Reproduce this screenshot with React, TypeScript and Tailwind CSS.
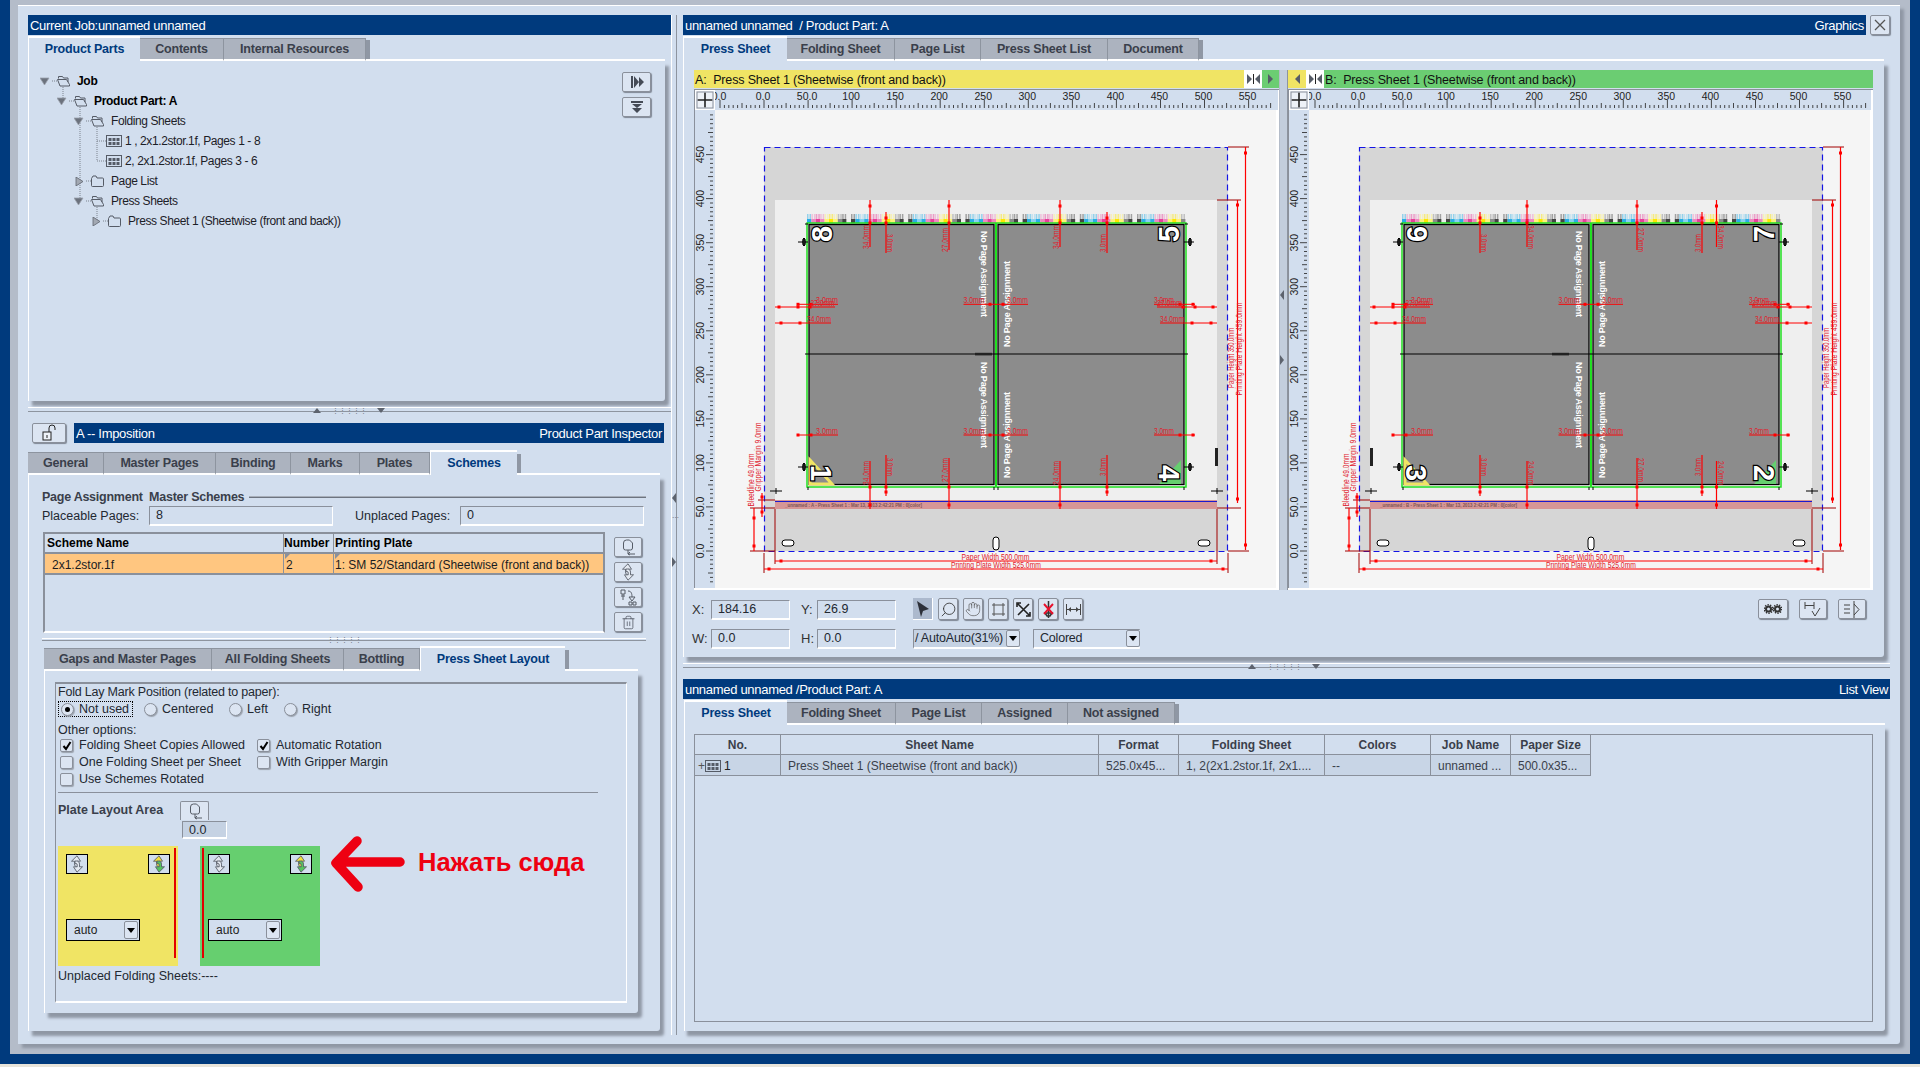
import { Hand, Search, Trash2 } from 'lucide-react';
import type { ReactNode } from 'react';

type Tab = { label: string; w: string };

const LEFT_TOP_TABS: Tab[] = [
  { label: 'Product Parts', w: 'w-[112px]' },
  { label: 'Contents', w: 'w-[84px]' },
  { label: 'Internal Resources', w: 'w-[142px]' },
];
const INSPECTOR_TABS: Tab[] = [
  { label: 'General', w: 'w-[76px]' },
  { label: 'Master Pages', w: 'w-[112px]' },
  { label: 'Binding', w: 'w-[75px]' },
  { label: 'Marks', w: 'w-[69px]' },
  { label: 'Plates', w: 'w-[70px]' },
  { label: 'Schemes', w: 'w-[87px]' },
];
const SCHEME_TABS: Tab[] = [
  { label: 'Gaps and Master Pages', w: 'w-[168px]' },
  { label: 'All Folding Sheets', w: 'w-[132px]' },
  { label: 'Bottling', w: 'w-[76px]' },
  { label: 'Press Sheet Layout', w: 'w-[145px]' },
];
const GRAPHICS_TABS: Tab[] = [
  { label: 'Press Sheet', w: 'w-[104px]' },
  { label: 'Folding Sheet', w: 'w-[108px]' },
  { label: 'Page List', w: 'w-[86px]' },
  { label: 'Press Sheet List', w: 'w-[127px]' },
  { label: 'Document', w: 'w-[91px]' },
];
const LIST_TABS: Tab[] = [
  { label: 'Press Sheet', w: 'w-[103px]' },
  { label: 'Folding Sheet', w: 'w-[109px]' },
  { label: 'Page List', w: 'w-[86px]' },
  { label: 'Assigned', w: 'w-[86px]' },
  { label: 'Not assigned', w: 'w-[107px]' },
];

function TitleBar({ left, right, className = '' }: { left: string; right?: string; className?: string }) {
  return (
    <div className={`flex h-[20px] items-center justify-between bg-[#003a7d] px-[2px] pt-[1px] text-[13px] tracking-[-0.3px] text-white whitespace-pre ${className}`}>
      <span>{left}</span>
      {right && <span>{right}</span>}
    </div>
  );
}

function TabBar({ tabs, active }: { tabs: Tab[]; active: number }) {
  return (
    <div className="flex h-[26px] items-end">
      {tabs.map((t, i) =>
        i === active ? (
          <div key={t.label} className={`${t.w} flex h-[25px] items-center justify-center border-l border-t-2 border-white text-[12.5px] font-bold tracking-[-0.2px] text-[#003a7d]`}>
            {t.label}
          </div>
        ) : (
          <div key={t.label} className={`${t.w} flex h-[23px] items-center justify-center border-r border-t border-b-2 border-r-[#8d949f] border-t-[#8d949f] border-b-white bg-[#acb3bf] text-[12.5px] font-bold tracking-[-0.2px] text-[#3a3f4b]`}>
            {t.label}
          </div>
        ),
      )}
      <div className="h-[21px] w-[4px] border-b-2 border-b-white bg-[#8f97a4]" />
      <div className="flex-1 border-b-2 border-white" />
    </div>
  );
}

function Divider({ dotsClass }: { dotsClass: string }) {
  return (
    <div className="flex h-[22px] flex-col">
      <div className="mt-[6px] flex h-[5px] items-start border-t border-white border-b border-b-[#8d949f]">
        <div className={`${dotsClass} flex h-[5px] items-center`}>
          <span className="h-0 w-0 border-x-[4px] border-b-[5px] border-x-transparent border-b-[#5d636e]" />
          <span className="flex w-[56px] justify-center text-[7px] leading-[5px] tracking-[0px] text-[#6d7480]">{'⋮⋮⋮⋮⋮'}</span>
          <span className="h-0 w-0 border-x-[4px] border-t-[5px] border-x-transparent border-t-[#5d636e]" />
        </div>
      </div>
    </div>
  );
}

function IconBtn({ className = '', children }: { className?: string; children?: ReactNode }) {
  return (
    <div className={`flex items-center justify-center rounded-[2px] border border-[#8a909b] bg-[#dce5f2] shadow-[1px_1px_1px_#7f8794] ${className}`}>
      {children}
    </div>
  );
}

function Field({ value, className = '' }: { value: string; className?: string }) {
  return (
    <div className={`flex h-[20px] items-center rounded-[1px] border-l border-t border-b-2 border-r border-l-[#8a909b] border-t-[#8a909b] border-r-white border-b-white pl-[6px] text-[12.5px] text-[#222831] ${className}`}>
      {value}
    </div>
  );
}

function ArrowBtn() {
  return (
    <span className="flex h-full w-[14px] shrink-0 items-center justify-center rounded-[2px] border border-[#8a909b] bg-[#dce5f2]">
      <span className="h-0 w-0 border-x-[4px] border-t-[5px] border-x-transparent border-t-black" />
    </span>
  );
}

function TreeTriangle({ open }: { open: boolean }) {
  return (
    <svg width="10" height="9" viewBox="0 0 10 9" className="shrink-0">
      {open ? <polygon points="0,1 9,1 4.5,8" fill="#6c727d" stroke="#9aa1ac" strokeWidth="0.8" /> : <polygon points="2,0 9,4.5 2,9" fill="#a2a8b2" stroke="#5f6570" strokeWidth="0.8" />}
    </svg>
  );
}

function FolderIcon({ open }: { open: boolean }) {
  return (
    <svg width="15" height="12" viewBox="0 0 15 12" className="block shrink-0" fill="none" stroke="#555b66" strokeWidth="1">
      {open ? (
        <path d="M2.5 3.5V1.5h4l1 1.5h4.5v4M1.5 4.5h9l3 5v1.5h-9.5z" />
      ) : (
        <path d="M1.5 3.5v7a1 1 0 0 0 1 1h10a1 1 0 0 0 1-1v-6.5a1 1 0 0 0-1-1H7l-1-2H3z" />
      )}
    </svg>
  );
}

function GridIcon({ className = '' }: { className?: string }) {
  return (
    <svg width="16" height="12" viewBox="0 0 16 12" className={`block shrink-0 ${className}`} fill="#555b66">
      <rect x="0.5" y="0.5" width="15" height="11" fill="none" stroke="#555b66" />
      {[2.5, 6.5, 10.5].map(x => [3, 7].map(y => <rect key={`${x}-${y}`} x={x} y={y} width="3" height="3" />))}
    </svg>
  );
}

const TREE = [
  { pl: 'pl-[11px]', label: 'Job', tri: true, open: true, kind: 'folder', bold: true },
  { pl: 'pl-[28px]', label: 'Product Part: A', tri: true, open: true, kind: 'folder', bold: true },
  { pl: 'pl-[45px]', label: 'Folding Sheets', tri: true, open: true, kind: 'folder' },
  { pl: 'pl-[77px]', label: '1 , 2x1.2stor.1f, Pages 1 - 8', tri: false, open: false, kind: 'grid' },
  { pl: 'pl-[77px]', label: '2, 2x1.2stor.1f, Pages 3 - 6', tri: false, open: false, kind: 'grid' },
  { pl: 'pl-[45px]', label: 'Page List', tri: true, open: false, kind: 'folder' },
  { pl: 'pl-[45px]', label: 'Press Sheets', tri: true, open: true, kind: 'folder' },
  { pl: 'pl-[62px]', label: 'Press Sheet 1 (Sheetwise (front and back))', tri: true, open: false, kind: 'folder' },
];

function Tree() {
  return (
    <div className="relative flex flex-col pt-[10px]">
      <svg width="120" height="170" className="absolute left-0 top-[10px]" fill="none" stroke="#7d838e" strokeWidth="1" strokeDasharray="1 1">
        <path d="M34 16V28M23 10h5M40 30h5M51 36V130M57 50h5M68 56V90M68 70h9M68 90h9M57 110h5M57 130h5M68 136V150M74 150h5" />
      </svg>
      {TREE.map(r => (
        <div key={r.label} className={`relative flex h-[20px] items-center ${r.pl} text-[12px] ${r.bold ? 'font-bold tracking-[-0.3px] text-black' : 'tracking-[-0.4px] text-[#1c2027]'}`}>
          {r.tri && <TreeTriangle open={r.open} />}
          {r.kind === 'folder' ? (
            <span className="ml-[6px] mr-[6px]">
              <FolderIcon open={r.open} />
            </span>
          ) : (
            <span className="mr-[3px]">
              <GridIcon />
            </span>
          )}
          <span>{r.label}</span>
        </div>
      ))}
    </div>
  );
}

function PartsPanel() {
  return (
    <div className="flex h-[340px] justify-between rounded-br-[3px] border-l border-white shadow-[4px_5px_3px_#8f97a4]">
      <div>
        <Tree />
      </div>
      <div className="flex flex-col gap-[5px] pr-[14px] pt-[11px]">
        <IconBtn className="h-[20px] w-[29px]">
          <svg width="14" height="12" viewBox="0 0 14 12">
            <path d="M1 0h2v12H1zM4 0l5 6-5 6zM9 1l5 5-5 5z" fill="#454b56" />
          </svg>
        </IconBtn>
        <IconBtn className="h-[20px] w-[29px]">
          <svg width="14" height="12" viewBox="0 0 14 12">
            <path d="M1 0h12v2H1zM2 3h10l-5 4zM2 7h10l-5 5z" fill="#454b56" />
          </svg>
        </IconBtn>
      </div>
    </div>
  );
}

function SyncIcon({ fill1 = '#e4e9f1', fill2 = '#e4e9f1' }: { fill1?: string; fill2?: string }) {
  const half = 'M9 .8 3.5 6.2h3v2.6c0 2 1.2 3.2 3 3.2h1.5V9.4H10c-.8 0-1.2-.4-1.2-1.2V6.2h3.7z';
  return (
    <svg width="18" height="18" viewBox="0 0 18 18" stroke="#5a606b" strokeWidth="0.9">
      <path d={half} fill={fill1} />
      <path d={half} fill={fill2} transform="rotate(180 9 9)" />
    </svg>
  );
}

function PasteIcon() {
  return (
    <svg width="18" height="18" viewBox="0 0 18 18" fill="none" stroke="#565c67">
      <path d="M4.5 5a3 3 0 0 1 3-3h3l3 3v5a2 2 0 0 1-2 2h-5a2 2 0 0 1-2-2zM9 12v4h7M9 16l2-2M9 16l2 1" />
    </svg>
  );
}

function SchemeTable() {
  return (
    <div className="h-[101px] w-[562px] border-x-2 border-t-2 border-b-2 border-x-[#8a909b] border-t-[#8a909b] border-b-white text-[12px]">
      <div className="grid h-[20px] grid-cols-[239px_50px_1fr] border-b-2 border-[#8a909b] font-bold text-black">
        <div className="flex items-center border-r border-[#8a909b] pl-[2px]">Scheme Name</div>
        <div className="flex items-center border-r border-[#8a909b]">Number</div>
        <div className="flex items-center pl-[1px]">Printing Plate</div>
      </div>
      <div className="grid h-[21px] grid-cols-[239px_50px_1fr] border-b-2 border-[#8a909b] bg-[#ffc680] text-[#191c22]">
        <div className="flex items-center border-r border-[#8a909b] pl-[7px] pt-[1px]">2x1.2stor.1f</div>
        <div className="relative flex items-center border-r border-[#8a909b] pl-[2px] pt-[2px]">
          <span className="absolute left-[1px] top-0 h-0 w-0 border-r-[5px] border-t-[5px] border-r-transparent border-t-[#8a909b]" />
          2
        </div>
        <div className="relative flex items-center pl-[1px] pt-[2px] whitespace-nowrap">
          <span className="absolute left-[1px] top-0 h-0 w-0 border-r-[5px] border-t-[5px] border-r-transparent border-t-[#8a909b]" />
          1: SM 52/Standard (Sheetwise (front and back))
        </div>
      </div>
    </div>
  );
}

function SmallSync({ colored }: { colored?: boolean }) {
  return (
    <div className="flex h-[20px] w-[22px] items-center justify-center border border-black bg-[#d2deee]">
      {colored ? <SyncIcon fill1="#f3df3c" fill2="#56c45f" /> : <SyncIcon />}
    </div>
  );
}

function AutoSelect() {
  return (
    <div className="mt-[45px] flex h-[22px] w-[74px] items-center justify-between border border-black bg-[#d2deee] pl-[7px] pr-[1px] py-[1px] text-[12px] text-[#222]">
      auto
      <ArrowBtn />
    </div>
  );
}

function Radio({ on, label, className = '' }: { on?: boolean; label: string; className?: string }) {
  return (
    <div className={`flex items-center ${className}`}>
      <span className="flex h-[13px] w-[13px] shrink-0 items-center justify-center rounded-full border border-[#8a909b] bg-[#dce5f2] shadow-[1px_1px_1px_#9aa1ac]">
        {on && <span className="h-[5px] w-[5px] rounded-full bg-black" />}
      </span>
      <span className="ml-[5px] text-[12.5px] text-[#222831] whitespace-nowrap">{label}</span>
    </div>
  );
}

function Check({ on, label, className = '' }: { on?: boolean; label: string; className?: string }) {
  return (
    <div className={`flex h-[17px] items-center ${className}`}>
      <span className="flex h-[13px] w-[13px] shrink-0 items-center justify-center rounded-[2px] border border-[#8a909b] bg-[#dce5f2] shadow-[1px_1px_1px_#9aa1ac]">
        {on && (
          <svg width="10" height="10" viewBox="0 0 10 10" fill="none" stroke="#000" strokeWidth="2">
            <path d="M1.5 5 4 8 8.5 1" />
          </svg>
        )}
      </span>
      <span className="ml-[6px] text-[12.5px] text-[#222831] whitespace-nowrap">{label}</span>
    </div>
  );
}

function PressSheetLayout() {
  return (
    <div className="ml-[2px] h-[342px] w-[594px] rounded-br-[3px] border-l border-white pl-[10px] pt-[11px] shadow-[4px_5px_3px_#8f97a4]">
      <div className="h-[321px] w-[572px] border-x border-y-2 border-l-[#8a909b] border-t-[#8a909b] border-r-white border-b-white pl-[2px] text-[12.5px] text-[#222831]">
        <div className="flex h-[17px] items-center tracking-[-0.2px]">Fold Lay Mark Position (related to paper):</div>
        <div className="flex h-[16px] items-center">
          <div className="flex h-[16px] w-[75px] shrink-0 items-center border border-dotted border-black pl-[2px]">
            <Radio on label="Not used" />
          </div>
          <Radio label="Centered" className="ml-[11px] w-[85px]" />
          <Radio label="Left" className="w-[55px]" />
          <Radio label="Right" />
        </div>
        <div className="mt-[6px] flex h-[14px] items-center">Other options:</div>
        <div className="grid w-[400px] grid-cols-[197px_1fr] pl-[2px]">
          <Check on label="Folding Sheet Copies Allowed" />
          <Check on label="Automatic Rotation" />
          <Check label="One Folding Sheet per Sheet" />
          <Check label="With Gripper Margin" />
          <Check label="Use Schemes Rotated" />
        </div>
        <div className="mt-[3px] h-[2px] w-[540px] border-b border-[#8a909b]" />
        <div className="mt-[7px] flex h-[19px] items-center pt-[1px]">
          <span className="w-[122px] font-bold text-[#3a3f4b]">Plate Layout Area</span>
          <div className="flex h-[19px] w-[29px] items-center justify-center rounded-t-[2px] border-x border-t border-[#8a909b] bg-[#dce5f2]">
            <PasteIcon />
          </div>
        </div>
        <div className="ml-[124px] mt-[2px] flex h-[18px] w-[45px] items-center rounded-[1px] border border-b-2 border-[#8a909b] border-b-white border-r-white bg-[#c5d2e3] pl-[6px] pt-[1px]">0.0</div>
        <div className="mt-[7px] flex items-start">
          <div className="relative h-[120px] w-[120px] bg-[#f0e464] pl-[8px] pt-[8px]">
            <div className="flex w-[104px] justify-between">
              <SmallSync />
              <SmallSync colored />
            </div>
            <AutoSelect />
            <span className="absolute bottom-[8px] right-[2px] top-[2px] w-[2px] bg-[#e30000]" />
          </div>
          <div className="relative ml-[22px] h-[120px] w-[120px] bg-[#66cf6f] pl-[8px] pt-[8px]">
            <div className="flex w-[104px] justify-between">
              <SmallSync />
              <SmallSync colored />
            </div>
            <AutoSelect />
            <span className="absolute bottom-[8px] left-[2px] top-[2px] w-[2px] bg-[#e30000]" />
          </div>
          <svg width="78" height="60" viewBox="0 0 78 60" className="ml-[10px] mt-[-12px]" fill="none" stroke="#ee0012" strokeWidth="9.5" strokeLinecap="round" strokeLinejoin="round">
            <path d="M27 7 6 29l22 24M8 28h62" />
          </svg>
          <span className="ml-[10px] text-[25.5px] font-bold leading-[32px] text-[#ee0012] whitespace-nowrap">Нажать сюда</span>
        </div>
        <div className="mt-[3px] flex h-[14px] items-center">Unplaced Folding Sheets:----</div>
      </div>
    </div>
  );
}

function InspectorPanel() {
  return (
    <div className="h-[556px] w-[632px] rounded-br-[3px] border-l border-white pl-[13px] pt-[14px] shadow-[4px_5px_3px_#8f97a4]">
      <div className="flex h-[16px] w-[604px] items-center text-[12.5px] font-bold tracking-[-0.25px] text-[#3a3f4b]">
        <span className="whitespace-pre">Page Assignment  Master Schemes</span>
        <span className="ml-[5px] h-[2px] flex-1 border-b border-[#6d7480] bg-[#a8afba]" />
      </div>
      <div className="mt-[1px] flex items-center text-[12.5px] text-[#222831]">
        <span className="w-[107px]">Placeable Pages:</span>
        <Field value="8" className="w-[184px]" />
        <span className="ml-[22px] w-[105px]">Unplaced Pages:</span>
        <Field value="0" className="w-[184px]" />
      </div>
      <div className="ml-[1px] mt-[6px] flex items-start">
        <SchemeTable />
        <div className="ml-[9px] flex flex-col gap-[5px] pt-[5px]">
          <IconBtn className="h-[20px] w-[28px]"><PasteIcon /></IconBtn>
          <IconBtn className="h-[20px] w-[28px]"><SyncIcon /></IconBtn>
          <IconBtn className="h-[20px] w-[28px]">
            <svg width="18" height="18" viewBox="0 0 18 18" fill="none" stroke="#565c67">
              <path d="M2 2h4v4H2zM2 8h4M4 6v6M9 3c3 0 4 2 4 6M10 9h6l-3 4zM10 14h3v3h-3zM14 14h3v3h-3z" />
            </svg>
          </IconBtn>
          <IconBtn className="h-[20px] w-[28px]">
            <Trash2 size={15} strokeWidth={1.1} color="#3f4550" />
          </IconBtn>
        </div>
      </div>
      <div className="mt-[5px] flex h-[3px] w-[604px] items-center justify-center border-t border-white border-b border-b-[#8d949f]">
        <span className="text-[7px] leading-[3px] text-[#6d7480]">{'⋮⋮⋮⋮⋮'}</span>
      </div>
      <div className="ml-[2px] mt-[4px] w-[594px]">
        <TabBar tabs={SCHEME_TABS} active={3} />
      </div>
      <PressSheetLayout />
    </div>
  );
}

function LeftColumn() {
  return (
    <div className="w-[643px] shrink-0">
      <TitleBar left="Current Job:unnamed unnamed" />
      <div className="w-[637px]">
        <TabBar tabs={LEFT_TOP_TABS} active={0} />
        <PartsPanel />
      </div>
      <Divider dotsClass="ml-[285px]" />
      <div className="flex h-[20px] items-center pl-[4px] pr-[7px]">
        <IconBtn className="h-[20px] w-[34px]">
          <svg width="16" height="18" viewBox="0 0 16 18" fill="none" stroke="#222">
            <rect x="2" y="8" width="8" height="8" fill="#eef2f8" />
            <path d="M8 8V4a3 3 0 0 1 6 0v2M6 11v3" />
          </svg>
        </IconBtn>
        <TitleBar left="A -- Imposition" right="Product Part Inspector" className="ml-[8px] flex-1" />
      </div>
      <div className="mt-[6px] w-[632px]">
        <TabBar tabs={INSPECTOR_TABS} active={5} />
        <InspectorPanel />
      </div>
    </div>
  );
}

function ColumnSplitter() {
  return (
    <div className="flex w-[12px] shrink-0 flex-col items-start">
      <div className="relative h-[1020px] w-[6px] border-x border-l-white border-r-[#8d949f]">
        <span className="absolute left-0 top-[478px] h-0 w-0 border-y-[5px] border-r-[4px] border-y-transparent border-r-[#5d636e]" />
        <span className="absolute left-0 top-[542px] h-0 w-0 border-y-[5px] border-l-[4px] border-y-transparent border-l-[#5d636e]" />
        <span className="absolute left-0 top-[500px] text-[7px] leading-[5px] text-[#6d7480]">{'⋯'}</span>
      </div>
    </div>
  );
}

const BAR_COLORS = ['#2aaee6', '#ee88c0', '#e83e9a', '#ee88c0', '#fff27a', '#ffe600', '#fff27a', '#8a8a8a', '#444444', '#eeeeee', '#444444', '#2aaee6', '#88d0f0'];

type VDim = { x: number; top: string; bottom: string; side: 1 | -1 };

const DIMS_A: VDim[] = [
  { x: 106, top: '34.0mm', bottom: '34.0mm', side: -1 },
  { x: 122, top: '3.0mm', bottom: '3.0mm', side: 1 },
  { x: 185, top: '27.0mm', bottom: '27.0mm', side: -1 },
  { x: 296, top: '34.0mm', bottom: '24.0mm', side: -1 },
  { x: 343, top: '3.0mm', bottom: '3.0mm', side: -1 },
];
const DIMS_B: VDim[] = [
  { x: 121, top: '3.0mm', bottom: '3.0mm', side: 1 },
  { x: 168, top: '34.0mm', bottom: '24.0mm', side: 1 },
  { x: 278, top: '27.0mm', bottom: '27.0mm', side: 1 },
  { x: 343, top: '3.0mm', bottom: '3.0mm', side: -1 },
  { x: 357.5, top: '34.0mm', bottom: '24.0mm', side: 1 },
];

const RED = '#ff0000';
const DARK_RED = '#a00000';
const LABEL = '#e0202c';

function RedText({ x, y, w, rot, children }: { x: number; y: number; w: number; rot?: number; children: string }) {
  return (
    <text
      x={x}
      y={y}
      fontSize="8.5"
      fill={LABEL}
      textLength={w}
      lengthAdjust="spacingAndGlyphs"
      textAnchor={rot ? 'middle' : undefined}
      transform={rot ? `rotate(${rot} ${x} ${y})` : undefined}
    >
      {children}
    </text>
  );
}

function HDim({ x1, x2, y, ticks }: { x1: number; x2: number; y: number; ticks: number[] }) {
  return (
    <g>
      <line x1={x1} x2={x2} y1={y} y2={y} stroke={RED} strokeWidth="1" />
      {ticks.map(t => (
        <rect key={t} x={t - 1.5} y={y - 1.5} width="3" height="3" fill={RED} />
      ))}
    </g>
  );
}

function VLine({ x, y1, y2, ticks }: { x: number; y1: number; y2: number; ticks: number[] }) {
  return (
    <g>
      <line x1={x} x2={x} y1={y1} y2={y2} stroke={RED} strokeWidth="1.2" />
      {ticks.map(t => (
        <rect key={t} x={x - 1.5} y={t - 1.5} width="3" height="3" fill={RED} />
      ))}
    </g>
  );
}

function PageNumber({ n, x, y, rot }: { n: string; x: number; y: number; rot: number }) {
  return (
    <text
      x={x}
      y={y}
      fontSize="29"
      fontWeight="700"
      fontFamily="'Liberation Sans', sans-serif"
      fill="#fff"
      stroke="#000"
      strokeWidth="2.5"
      paintOrder="stroke"
      textAnchor="middle"
      dominantBaseline="central"
      transform={`rotate(${rot} ${x} ${y})`}
    >
      {n}
    </text>
  );
}

function RegMark({ x, y }: { x: number; y: number }) {
  return (
    <g stroke="#000" strokeWidth="1" fill="none">
      <line x1={x - 5} x2={x + 5} y1={y} y2={y} />
      <ellipse cx={x + 1} cy={y} rx="1.3" ry="4" fill="#222" />
    </g>
  );
}

function RotLabel({ x, y, rot }: { x: number; y: number; rot: number }) {
  return (
    <text x={x} y={y} fontSize="9" fontWeight="700" fill="#fff" textLength="86" lengthAdjust="spacing" textAnchor="middle" dominantBaseline="central" transform={`rotate(${rot} ${x} ${y})`}>
      No Page Assignment
    </text>
  );
}

function PressSheet({ side }: { side: 'A' | 'B' }) {
  const isA = side === 'A';
  const dims = isA ? DIMS_A : DIMS_B;
  const nums = isA ? ['8', '5', '1', '4'] : ['6', '7', '3', '2'];
  const cellW = 4.4;
  const cells = Array.from({ length: 86 }, (_, i) => i);
  return (
    <g>
      <rect x="0" y="0" width="464" height="404" fill="#d6d6d6" />
      <rect x="11" y="53" width="442" height="300" fill="#efefef" />
      <rect x="11" y="353" width="442" height="9" fill="#d69696" />
      <line x1="11" x2="453" y1="354.5" y2="354.5" stroke="#1a1ad0" strokeWidth="1" />
      <text x="21" y="360" fontSize="4.5" fontWeight="700" fill="#7d5555" textLength="137" lengthAdjust="spacingAndGlyphs">
        {`_unnamed : ${side}   - Press Sheet 1 : Mar 13, 2013 2:42:21 PM : 0[color]`}
      </text>
      <rect x="0.5" y="0.5" width="463" height="404" fill="none" stroke="#1414e6" strokeWidth="1.2" strokeDasharray="6 4" />

      {cells.map(i => {
        const c = BAR_COLORS[i % BAR_COLORS.length];
        return (
          <g key={i}>
            <rect x={43 + i * cellW} y={72} width={cellW} height={4} fill={c} />
            <line x1={43 + i * cellW} x2={43 + (i + 1) * cellW} y1={69.5} y2={69.5} stroke={c} strokeWidth="5" strokeDasharray="1.5 1" opacity="0.45" />
          </g>
        );
      })}

      <rect x="43" y="76" width="379" height="264" fill="none" stroke="#22e022" strokeWidth="1.5" />
      <line x1="232" x2="232" y1="76" y2="340" stroke="#22e022" strokeWidth="2" />
      <rect x="45" y="77.5" width="185" height="260" fill="#8c8c8c" stroke="#000" strokeWidth="1.3" />
      <rect x="234" y="77.5" width="186" height="260" fill="#8c8c8c" stroke="#000" strokeWidth="1.3" />
      <line x1="41" x2="424" y1="207" y2="207" stroke="#000" strokeWidth="1" />
      <rect x={isA ? 211 : 193} y="205.8" width="17" height="2.6" fill="#222" />

      <path d="M44 340v3M230 340v3M234 340v3M420 340v3M41 77h3M421 77h3" stroke="#000" fill="none" />

      <RegMark x={39} y={95} />
      <RegMark x={425} y={95} />
      <RegMark x={39} y={320} />
      <RegMark x={425} y={320} />

      <polygon points="46,313 68,337 46,337" fill="none" stroke="#f0e464" strokeWidth="3" />
      <polygon points="417,313 395,337 417,337" fill="#66cf6f" />

      <RotLabel x={220} y={127} rot={90} />
      <RotLabel x={220} y={258} rot={90} />
      <RotLabel x={243} y={157} rot={-90} />
      <RotLabel x={243} y={288} rot={-90} />

      <PageNumber n={nums[0]} x={58} y={87} rot={-90} />
      <PageNumber n={nums[1]} x={405} y={87} rot={-90} />
      <PageNumber n={nums[2]} x={57} y={326} rot={90} />
      <PageNumber n={nums[3]} x={405} y={326} rot={90} />

      {dims.map(d => {
        const long = d.top !== '3.0mm';
        const y1 = long ? 53 : 65;
        const y2 = d.top === '27.0mm' ? 103 : long ? 100 : 106;
        const by1 = d.bottom === '27.0mm' ? 311 : d.bottom === '3.0mm' ? 308 : 314;
        const by2 = d.bottom === '3.0mm' ? 349 : 362;
        const tx = d.x + d.side;
        const rot = d.side === 1 ? 90 : -90;
        return (
          <g key={d.x}>
            <VLine x={d.x} y1={y1} y2={y2} ticks={[y1 + 6, 76]} />
            <VLine x={d.x} y1={by1} y2={by2} ticks={[by2 - 4, 340]} />
            <RedText x={tx} y={y2 - 10} w={long ? 24 : 18} rot={rot}>
              {d.top}
            </RedText>
            <RedText x={tx} y={by1 + 12} w={long ? 24 : 18} rot={rot}>
              {d.bottom}
            </RedText>
          </g>
        );
      })}

      <HDim x1={33} x2={74} y={157.3} ticks={[34, 47]} />
      <HDim x1={199.5} x2={264} y={157.3} ticks={[226, 239]} />
      <HDim x1={390} x2={431} y={157.3} ticks={[416, 429]} />
      <HDim x1={11} x2={71} y={160} ticks={[15, 34, 46]} />
      <HDim x1={393} x2={453} y={160} ticks={[419, 431, 449]} />
      <HDim x1={11} x2={67} y={176} ticks={[17, 36]} />
      <HDim x1={396} x2={453} y={176} ticks={[428, 447]} />
      <HDim x1={33} x2={74} y={288} ticks={[34, 47]} />
      <HDim x1={199.5} x2={264} y={288} ticks={[226, 239]} />
      <HDim x1={390} x2={431} y={288} ticks={[416, 429]} />
      <RedText x={52} y={156} w={22}>3.0mm</RedText>
      <RedText x={199.5} y={156} w={21}>3.0mm</RedText>
      <RedText x={243} y={156} w={21}>3.0mm</RedText>
      <RedText x={390} y={156} w={20}>3.0mm</RedText>
      <RedText x={46.5} y={159} w={24}>27.0mm</RedText>
      <RedText x={393} y={159} w={25}>27.0mm</RedText>
      <RedText x={43} y={175} w={24}>34.0mm</RedText>
      <RedText x={396} y={175} w={24}>34.0mm</RedText>
      <RedText x={52} y={287} w={22}>3.0mm</RedText>
      <RedText x={199.5} y={287} w={21}>3.0mm</RedText>
      <RedText x={243} y={287} w={21}>3.0mm</RedText>
      <RedText x={390} y={287} w={20}>3.0mm</RedText>

      <path d="M464 0h21M453 53h24M453 361h24M464 404h21M-6 353h17M-14 361h25M-14 404h25M11 362v55M453 362v55M0 406v20M464 406v20" stroke={DARK_RED} fill="none" />
      <VLine x={473.5} y1={53} y2={356} ticks={[58, 352]} />
      <VLine x={481.5} y1={0} y2={403} ticks={[6, 398]} />
      <RedText x={470} y={211} w={60} rot={-90}>Paper Height 350.0mm</RedText>
      <RedText x={478} y={202} w={93} rot={-90}>Printing Plate Height 459.0mm</RedText>
      <VLine x={-10} y1={361} y2={404} ticks={[371, 399]} />
      <VLine x={-2} y1={346} y2={370} ticks={[350, 365]} />
      <RedText x={-10} y={333} w={53} rot={-90}>Bleedline 49.0mm</RedText>
      <RedText x={-3} y={310} w={69} rot={-90}>Gripper Margin 9.0mm</RedText>

      <HDim x1={11} x2={453} y={414} ticks={[17, 447]} />
      <HDim x1={0} x2={464} y={422} ticks={[5, 459]} />
      <RedText x={197.5} y={413} w={68}>Paper Width 500.0mm</RedText>
      <RedText x={187} y={421} w={90}>Printing Plate Width 525.0mm</RedText>

      <rect x="18" y="393" width="12" height="6" rx="3" fill="#fff" stroke="#000" />
      <rect x="229" y="390" width="6" height="13" rx="3" fill="#fff" stroke="#000" />
      <rect x="434" y="393" width="12" height="6" rx="3" fill="#fff" stroke="#000" />
      <path d="M6 344h12M12 341v6M447 344h12M453 341v6" stroke="#000" fill="none" />
      <rect x={isA ? 451 : 11} y="301" width="3" height="18" fill="#222" />
    </g>
  );
}

const STEP = 44.05;

function Rulers({ ox, oy, width }: { ox: number; oy: number; width: number }) {
  const topLabels = ['0.0', '0.0', '50.0', '100', '150', '200', '250', '300', '350', '400', '450', '500', '550'];
  const leftLabels = ['0.0', '50.0', '100', '150', '200', '250', '300', '350', '400', '450'];
  const minor = STEP / 10;
  let top = '';
  for (let i = 0; i < 126; i++) {
    const x = ox - 44 + i * minor;
    if (x < 26 || x > width - 6) continue;
    const len = i % 10 === 0 ? 8 : i % 5 === 0 ? 5 : 3;
    top += `M${x.toFixed(1)} 19v-${len}`;
  }
  let left = '';
  for (let i = -25; i < 104; i++) {
    const y = oy + 404 - i * minor;
    if (y < 24 || y > 494) continue;
    const len = i % 10 === 0 ? 7 : i % 5 === 0 ? 5 : 3;
    left += `M19 ${y.toFixed(1)}h-${len}`;
  }
  return (
    <g fontSize="10.5" fill="#222">
      <rect x="21" y="1" width={width - 22} height="20" fill="#d2deee" />
      <rect x="1" y="21" width="20" height="478" fill="#d2deee" />
      <path d={top} stroke="#333" strokeWidth="0.9" />
      <path d={left} stroke="#333" strokeWidth="0.9" />
      {topLabels.map((t, i) => (
        <text key={i} x={ox - 1 + (i - 1) * STEP} y="11" textAnchor="middle">{t}</text>
      ))}
      {leftLabels.map((t, i) => {
        const y = oy + 404 - i * STEP;
        return (
          <text key={t} x="10" y={y} textAnchor="middle" transform={`rotate(-90 10 ${y})`}>{t}</text>
        );
      })}
      <rect x="1.5" y="1.5" width="19" height="19" fill="#eef2f8" stroke="#fff" strokeWidth="1" />
      <path d="M11 3.5v15M3.5 11h15" stroke="#222" strokeWidth="1.6" />
      <rect x="3" y="3" width="16" height="16" fill="none" stroke="#8a909b" />
    </g>
  );
}

function SheetView({ side }: { side: 'A' | 'B' }) {
  const ox = side === 'A' ? 70 : 71;
  const oy = 58;
  return (
    <svg width="585" height="501" viewBox="0 0 585 501" className="mt-[1px] block font-['Liberation_Sans',sans-serif]">
      <rect x="0" y="0" width="585" height="501" fill="#fff" />
      <rect x="21" y="21" width="561" height="478" fill="#f5f5f5" />
      <line x1="0" x2="585" y1="0.5" y2="0.5" stroke="#8a909b" />
      <line x1="0.5" x2="0.5" y1="0" y2="499" stroke="#8a909b" />
      <Rulers ox={ox} oy={oy} width={side === 'A' ? 585 : 584} />
      <g transform={`translate(${ox} ${oy})`}>
        <PressSheet side={side} />
      </g>
    </svg>
  );
}

function SplitIcon() {
  return (
    <svg width="13" height="10" viewBox="0 0 13 10" fill="#565c67">
      <path d="M0 0v10l5-5zM13 0v10L8 5z" />
      <path d="M6.5 0v10" stroke="#222" strokeWidth="1" />
    </svg>
  );
}

function TriSmall({ dir }: { dir: 'left' | 'right' }) {
  return dir === 'left' ? (
    <span className="h-0 w-0 border-y-[5px] border-r-[5px] border-y-transparent border-r-[#565c67]" />
  ) : (
    <span className="h-0 w-0 border-y-[5px] border-l-[5px] border-y-transparent border-l-[#565c67]" />
  );
}

function ToolButtons() {
  return (
    <div className="flex h-[22px] gap-[5px]">
      <div className="flex h-[22px] w-[20px] items-center justify-center border-b border-r border-b-white border-r-white bg-[#acb9cd]">
        <svg width="14" height="18" viewBox="0 0 14 18"><path d="M1 1l12 8-6 2-2 6z" fill="#2d3039" /></svg>
      </div>
      <IconBtn className="h-[22px] w-[20px]"><Search size={17} strokeWidth={1.2} color="#333" className="-scale-x-100" /></IconBtn>
      <IconBtn className="h-[22px] w-[20px]"><Hand size={16} strokeWidth={1} color="#555" /></IconBtn>
      <IconBtn className="h-[22px] w-[20px]">
        <svg width="15" height="15" viewBox="0 0 15 15" fill="none" stroke="#555"><path d="M3 1v13M12 1v13M1 3h13M1 12h13" /></svg>
      </IconBtn>
      <IconBtn className="h-[22px] w-[20px]">
        <svg width="15" height="15" viewBox="0 0 15 15" fill="none" stroke="#222" strokeWidth="2.2"><path d="M2 2l11 11M13 2 2 13M1 5V1h4M10 14h4v-4" strokeWidth="1.6" /></svg>
      </IconBtn>
      <IconBtn className="h-[22px] w-[20px]">
        <svg width="15" height="17" viewBox="0 0 15 17" fill="none">
          <path d="M7.5 0v17M4 12h7l-2 3H6z" stroke="#333" strokeWidth="1.5" />
          <path d="M3 3l9 10M12 3 3 13" stroke="#e8112d" strokeWidth="1.9" />
        </svg>
      </IconBtn>
      <IconBtn className="h-[22px] w-[20px]">
        <svg width="15" height="11" viewBox="0 0 15 11" fill="#444" stroke="#444"><path d="M.5 0v11M14.5 0v11M1 5.5h13" /><path d="M2 5.5l3-2.5v5zM13 5.5l-3-2.5v5z" stroke="none" /></svg>
      </IconBtn>
    </div>
  );
}

function Coord({ label, value, labelClass }: { label: string; value: string; labelClass: string }) {
  return (
    <>
      <span className={`${labelClass} text-[13px] text-[#333]`}>{label}</span>
      <Field value={value} className="w-[79px]" />
    </>
  );
}

function SelectField({ value, className }: { value: string; className: string }) {
  return (
    <div className={`flex h-[20px] w-[107px] items-center justify-between rounded-[1px] border-l border-t border-b-2 border-l-[#8a909b] border-t-[#8a909b] border-b-white text-[12.5px] tracking-[-0.2px] text-[#222831] whitespace-nowrap ${className}`}>
      {value}
      <ArrowBtn />
    </div>
  );
}

function GraphicsPanel() {
  return (
    <div className="h-[596px] w-[1201px] rounded-br-[3px] border-l border-white pl-[10px] pt-[9px] shadow-[4px_5px_3px_#8f97a4]">
      <div className="flex items-start">
        <div className="w-[585px]">
          <div className="flex h-[18px] text-[12.5px] tracking-[-0.15px] text-[#111]">
            <div className="flex flex-1 items-center whitespace-pre bg-[#f0e464] pl-[1px] pt-[2px]">A:  Press Sheet 1 (Sheetwise (front and back))</div>
            <div className="flex w-[18px] items-center justify-center bg-white"><SplitIcon /></div>
            <div className="flex w-[17px] items-center justify-center bg-[#6bcd72]"><TriSmall dir="right" /></div>
          </div>
          <SheetView side="A" />
        </div>
        <div className="relative h-[520px] w-[9px] border-x border-l-[#b4bcc9] border-r-[#8d949f] bg-[#c3cedd]">
          <span className="absolute left-0 top-[220px] h-0 w-0 border-y-[5px] border-r-[4px] border-y-transparent border-r-[#5d636e]" />
          <span className="absolute left-0 top-[285px] h-0 w-0 border-y-[5px] border-l-[4px] border-y-transparent border-l-[#5d636e]" />
        </div>
        <div className="w-[585px]">
          <div className="flex h-[18px] text-[12.5px] tracking-[-0.15px] text-[#111]">
            <div className="flex w-[18px] items-center justify-center bg-[#f0e464]"><TriSmall dir="left" /></div>
            <div className="flex w-[18px] items-center justify-center bg-white"><SplitIcon /></div>
            <div className="flex flex-1 items-center whitespace-pre bg-[#6bcd72] pl-[1px] pt-[2px]">B:  Press Sheet 1 (Sheetwise (front and back))</div>
          </div>
          <SheetView side="B" />
        </div>
      </div>
      <div className="ml-[-2px] mt-[8px] flex items-start">
        <div className="mt-[2px] flex w-[221px] flex-col gap-[9px]">
          <div className="flex items-center">
            <Coord label="X:" value="184.16" labelClass="w-[19px]" />
            <Coord label="Y:" value="26.9" labelClass="ml-[11px] w-[16px]" />
          </div>
          <div className="flex items-center">
            <Coord label="W:" value="0.0" labelClass="w-[19px]" />
            <Coord label="H:" value="0.0" labelClass="ml-[11px] w-[16px]" />
          </div>
        </div>
        <div className="flex flex-col gap-[9px]">
          <ToolButtons />
          <div className="flex gap-[13px]">
            <SelectField value="/ AutoAuto(31%)" className="bg-[#c5d2e3] pl-[1px]" />
            <SelectField value="Colored" className="pl-[6px]" />
          </div>
        </div>
        <div className="ml-auto mr-[18px] mt-[1px] flex gap-[11px]">
          <IconBtn className="h-[20px] w-[30px]">
            <svg width="18" height="12" viewBox="0 0 18 12" fill="none" stroke="#333">
              <circle cx="4.5" cy="6" r="2.5" strokeWidth="2" />
              <circle cx="13.5" cy="6" r="2.5" strokeWidth="2" />
              <circle cx="4.5" cy="6" r="4.2" strokeWidth="1.4" strokeDasharray="1.4 1.2" />
              <circle cx="13.5" cy="6" r="4.2" strokeWidth="1.4" strokeDasharray="1.4 1.2" />
            </svg>
          </IconBtn>
          <IconBtn className="h-[20px] w-[28px]">
            <svg width="18" height="17" viewBox="0 0 18 17" fill="none" stroke="#444"><path d="M1 1v7M10 1v7M1 4.5h9M8 10l3 5 5-8" /></svg>
          </IconBtn>
          <IconBtn className="h-[20px] w-[28px]">
            <svg width="18" height="17" viewBox="0 0 18 17" fill="none" stroke="#444"><path d="M1 4h6M1 8h6M1 12h6M11 0v17M11 3l5 5.5-5 5.5" /></svg>
          </IconBtn>
        </div>
      </div>
    </div>
  );
}

const LIST_COLS = 'grid grid-cols-[86px_318px_80px_146px_106px_80px_80px] w-fit';
const LIST_HEAD = ['No.', 'Sheet Name', 'Format', 'Folding Sheet', 'Colors', 'Job Name', 'Paper Size'];
const LIST_ROW = ['Press Sheet 1 (Sheetwise (front and back))', '525.0x45...', '1, 2(2x1.2stor.1f, 2x1....', '--', 'unnamed ...', '500.0x35...'];

function ListPanel() {
  return (
    <div className="ml-[1px] h-[306px] w-[1201px] rounded-br-[3px] border-l border-white pl-[9px] pt-[9px] shadow-[3px_5px_3px_#8f97a4]">
      <div className="h-[288px] w-[1179px] border border-[#8a909b] text-[12px]">
        <div className={LIST_COLS}>
          {LIST_HEAD.map(h => (
            <div key={h} className="flex h-[20px] items-center justify-center border-b border-r border-[#8a909b] font-bold text-[#3a3f4b]">
              {h}
            </div>
          ))}
          <div className="flex h-[21px] items-center border-b border-r border-[#8a909b] bg-[#c8d5e6] pl-[3px] pt-[1px] text-[#222]">
            <span className="text-[#555]">+</span>
            <GridIcon />
            <span className="ml-[3px]">1</span>
          </div>
          {LIST_ROW.map(c => (
            <div key={c} className="flex h-[21px] items-center overflow-hidden whitespace-nowrap border-b border-r border-[#8a909b] bg-[#c8d5e6] pl-[7px] pt-[1px] text-[#3a3f4b]">
              {c}
            </div>
          ))}
        </div>
      </div>
    </div>
  );
}

function RightColumn() {
  return (
    <div className="w-[1207px] shrink-0">
      <div className="flex items-center">
        <TitleBar left="unnamed unnamed  / Product Part: A" right="Graphics" className="w-[1183px]" />
        <IconBtn className="ml-[4px] h-[20px] w-[20px]">
          <svg width="12" height="12" viewBox="0 0 12 12" fill="none" stroke="#555" strokeWidth="1.3"><path d="M1 1l10 10M11 1 1 11" /></svg>
        </IconBtn>
      </div>
      <div className="w-[1201px]">
        <TabBar tabs={GRAPHICS_TABS} active={0} />
        <GraphicsPanel />
      </div>
      <Divider dotsClass="ml-[565px]" />
      <TitleBar left="unnamed unnamed /Product Part: A" right="List View" />
      <div className="ml-[1px] w-[1201px]">
        <TabBar tabs={LIST_TABS} active={0} />
      </div>
      <ListPanel />
    </div>
  );
}

export default function App() {
  return (
    <div className="h-[1067px] w-[1920px] overflow-hidden bg-[#e8e4da] font-['Liberation_Sans',sans-serif] text-[13px]">
      <div className="h-[1064px] bg-[#003a7d] px-[10px] pb-[10px]">
        <div className="h-[1054px] bg-[#b4bcc9] pb-[10px] pl-[8px] pr-[10px] pt-[5px]">
          <div className="flex h-[1039px] rounded-br-[3px] border-t border-white bg-[#d2deee] pl-[10px] pt-[9px] shadow-[4px_4px_3px_#8f97a4]">
            <LeftColumn />
            <ColumnSplitter />
            <RightColumn />
          </div>
        </div>
      </div>
    </div>
  );
}
